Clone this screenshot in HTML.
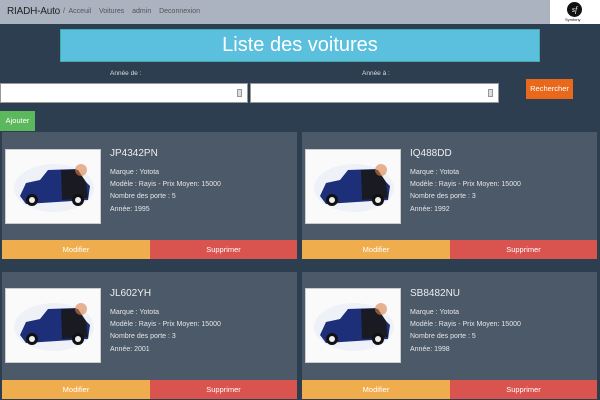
<!DOCTYPE html>
<html><head><meta charset="utf-8"><style>
*{margin:0;padding:0;box-sizing:border-box}
body{width:600px;height:400px;overflow:hidden;background:#2c3e50;font-family:"Liberation Sans",sans-serif;position:relative}
.a{position:absolute}
.nav{left:0;top:0;width:600px;height:24px;background:#aab3bf}
.brand{left:7px;top:6px;font-size:10px;color:#222;letter-spacing:-0.2px}
.links{left:63px;top:8px;font-size:7px;color:#555;word-spacing:2px}
.sf{left:550px;top:0;width:50px;height:24px;background:#fff}
.title{left:60px;top:29px;width:480px;height:33px;background:#5bc0de;border:1px solid #4aa;color:#fff;font-size:20px;text-align:center;line-height:31px}
.lbl{font-size:6.5px;color:#ddd}
.inp{background:#fff;height:20px;top:83px;border:1px solid #999}
.spin{width:5px;height:8px;background:#ddd;border:1px solid #999;top:5px}
.btn{color:#fff;font-size:7.5px;text-align:center}
.card{background:#4b5969;width:295px;height:127px}
.img{width:96px;height:75px;background:#fafafa;border:1px solid #ccc}
.t{font-size:10px;color:#eee}
.info{font-size:7px;color:#e6e6e6;line-height:12.2px}
.mod{background:#f0ad4e;width:148px;height:19px;line-height:19px}
.sup{background:#d9534f;width:147px;height:19px;line-height:19px}
</style></head><body>
<div class="a nav"></div>
<div class="a brand">RIADH-Auto</div>
<div class="a links">/ Acceuil &nbsp;Voitures &nbsp;admin &nbsp;Deconnexion</div>
<div class="a sf"><div class="a" style="left:17px;top:2px;width:15px;height:15px;border-radius:50%;background:#111;color:#fff;font-size:8px;font-style:italic;text-align:center;line-height:15px;font-family:'Liberation Serif',serif">sf</div><div class="a" style="left:15px;top:17px;font-size:4px;color:#111">Symfony</div></div>
<div class="a title">Liste des voitures</div>
<div class="a lbl" style="left:110px;top:70px">Année de :</div>
<div class="a lbl" style="left:362px;top:70px">Année à :</div>
<div class="a inp" style="left:0;width:248px"><div class="a spin" style="left:236px"></div></div>
<div class="a inp" style="left:250px;width:249px"><div class="a spin" style="left:237px"></div></div>
<div class="a btn" style="left:526px;top:79px;width:47px;height:20px;line-height:20px;background:#e8681c">Rechercher</div>
<div class="a btn" style="left:0;top:111px;width:35px;height:20px;line-height:20px;background:#5cb85c">Ajouter</div>

<svg width="0" height="0" style="position:absolute"><defs><g id="car"><ellipse cx="48" cy="38" rx="40" ry="24" fill="#eef2f8"/><path d="M14 46 L20 33 L34 30 L42 20 L70 19 L78 30 L84 36 L82 50 L20 54 Z" fill="#1e2f7a"/><path d="M55 20 L72 20 L80 32 L82 48 L56 50 Z" fill="#1a1a22"/><circle cx="26" cy="50" r="6" fill="#111"/><circle cx="26" cy="50" r="3" fill="#eee"/><circle cx="72" cy="50" r="6" fill="#111"/><circle cx="72" cy="50" r="3" fill="#eee"/><circle cx="75" cy="20" r="6" fill="#d8804a" opacity=".6"/></g></defs></svg>

<div class="a card" style="left:2px;top:132px"></div>
<div class="a img" style="left:5px;top:149px"><svg width="94" height="73"><use href="#car"/></svg></div>
<div class="a t" style="left:110px;top:148px">JP4342PN</div>
<div class="a info" style="left:110px;top:167px">Marque : Yotota<br>Modèle : Rayis - Prix Moyen: 15000<br>Nombre des porte : 5<br>Année: 1995</div>
<div class="a btn mod" style="left:2px;top:240px">Modifier</div>
<div class="a btn sup" style="left:150px;top:240px">Supprimer</div>

<div class="a card" style="left:302px;top:132px"></div>
<div class="a img" style="left:305px;top:149px"><svg width="94" height="73"><use href="#car"/></svg></div>
<div class="a t" style="left:410px;top:148px">IQ488DD</div>
<div class="a info" style="left:410px;top:167px">Marque : Yotota<br>Modèle : Rayis - Prix Moyen: 15000<br>Nombre des porte : 3<br>Année: 1992</div>
<div class="a btn mod" style="left:302px;top:240px">Modifier</div>
<div class="a btn sup" style="left:450px;top:240px">Supprimer</div>

<div class="a card" style="left:2px;top:272px"></div>
<div class="a img" style="left:5px;top:288px"><svg width="94" height="73"><use href="#car"/></svg></div>
<div class="a t" style="left:110px;top:288px">JL602YH</div>
<div class="a info" style="left:110px;top:307px">Marque : Yotota<br>Modèle : Rayis - Prix Moyen: 15000<br>Nombre des porte : 3<br>Année: 2001</div>
<div class="a btn mod" style="left:2px;top:380px">Modifier</div>
<div class="a btn sup" style="left:150px;top:380px">Supprimer</div>

<div class="a card" style="left:302px;top:272px"></div>
<div class="a img" style="left:305px;top:288px"><svg width="94" height="73"><use href="#car"/></svg></div>
<div class="a t" style="left:410px;top:288px">SB8482NU</div>
<div class="a info" style="left:410px;top:307px">Marque : Yotota<br>Modèle : Rayis - Prix Moyen: 15000<br>Nombre des porte : 5<br>Année: 1998</div>
<div class="a btn mod" style="left:302px;top:380px">Modifier</div>
<div class="a btn sup" style="left:450px;top:380px">Supprimer</div>
</body></html>
